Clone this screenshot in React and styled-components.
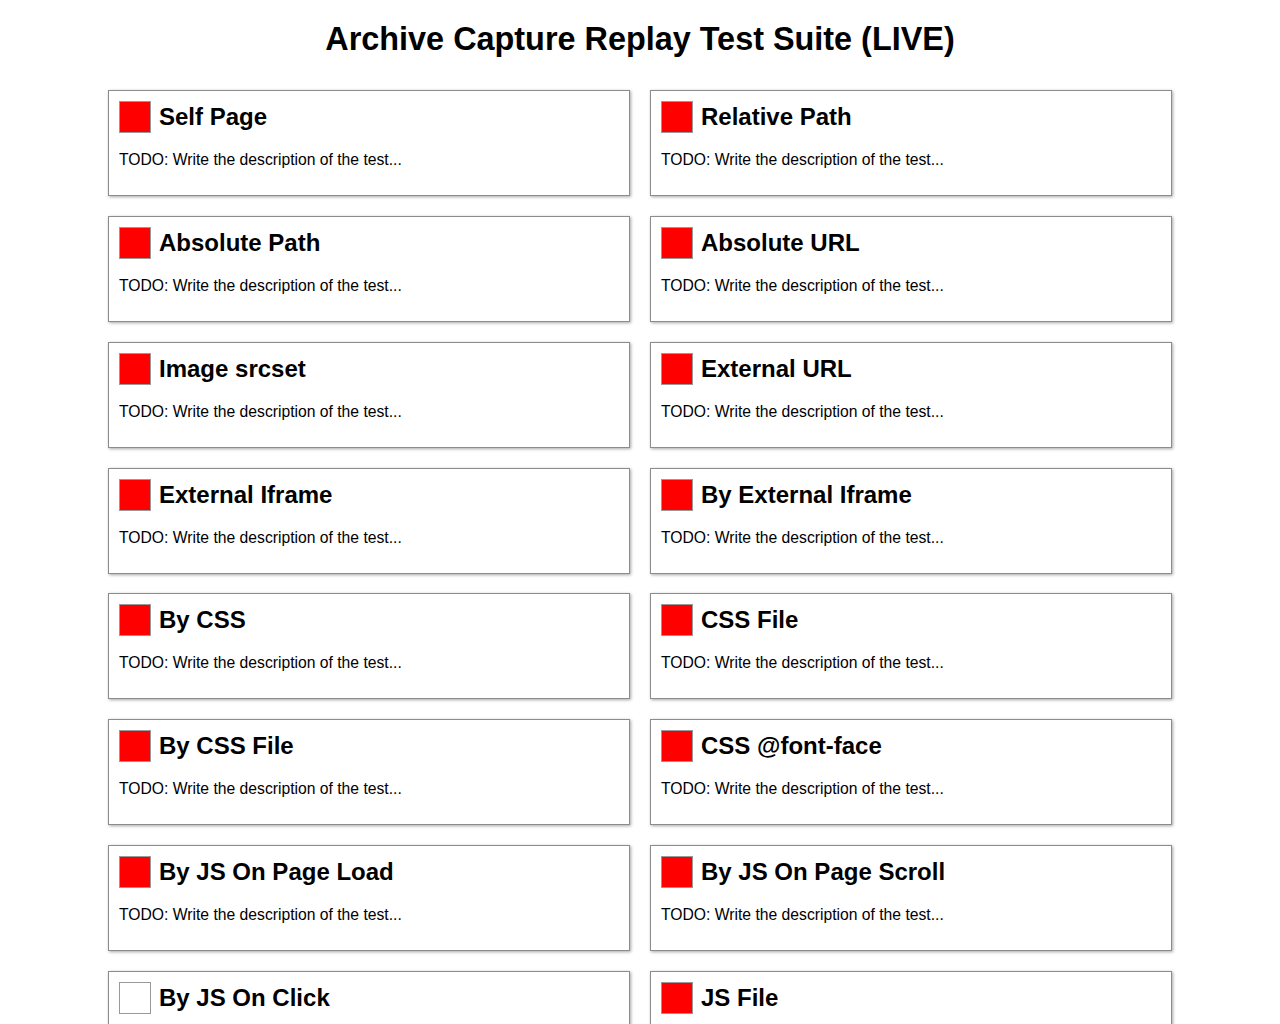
import React from "react";
import styled, { createGlobalStyle } from "styled-components";

const Global = createGlobalStyle`
  html, body { margin: 0; padding: 0; background: #fff; }
  body { font-family: "Liberation Sans", Arial, sans-serif; color: #000; }
`;

const Title = styled.h1`
  font-size: 32.4px;
  line-height: 37px;
  font-weight: bold;
  text-align: center;
  margin: 21px 0 32px;
`;

const Grid = styled.div`
  width: 1064px;
  margin: 0 auto;
  display: grid;
  grid-template-columns: 1fr 1fr;
  column-gap: 20px;
  row-gap: 19.86px;
`;

const Card = styled.section`
  border: 1px solid #8c8c8c;
  box-shadow: 1px 1px 3px rgba(0, 0, 0, 0.35);
  padding: 10px;
  background: #fff;
`;

const Header = styled.div`
  display: flex;
  align-items: center;
  gap: 8px;
  height: 32px;
`;

const Status = styled.span`
  box-sizing: border-box;
  width: 32px;
  height: 32px;
  border: 1px solid #999;
  background: ${(p) => (p.$pass === null ? "#fff" : "#f00")};
  flex: none;
`;

const Name = styled.h2`
  margin: 0;
  font-size: 24px;
  font-weight: bold;
  line-height: 28px;
`;

const Desc = styled.p`
  margin: 18px 0 16px;
  font-size: 15.7px;
  line-height: 18px;
`;

const tests = [
  ["Self Page", false],
  ["Relative Path", false],
  ["Absolute Path", false],
  ["Absolute URL", false],
  ["Image srcset", false],
  ["External URL", false],
  ["External Iframe", false],
  ["By External Iframe", false],
  ["By CSS", false],
  ["CSS File", false],
  ["By CSS File", false],
  ["CSS @font-face", false],
  ["By JS On Page Load", false],
  ["By JS On Page Scroll", false],
  ["By JS On Click", null],
  ["JS File", false],
];

export default function App() {
  return (
    <>
      <Global />
      <Title>Archive Capture Replay Test Suite (LIVE)</Title>
      <Grid>
        {tests.map(([name, pass]) => (
          <Card key={name}>
            <Header>
              <Status $pass={pass} />
              <Name>{name}</Name>
            </Header>
            <Desc>TODO: Write the description of the test...</Desc>
          </Card>
        ))}
      </Grid>
    </>
  );
}
